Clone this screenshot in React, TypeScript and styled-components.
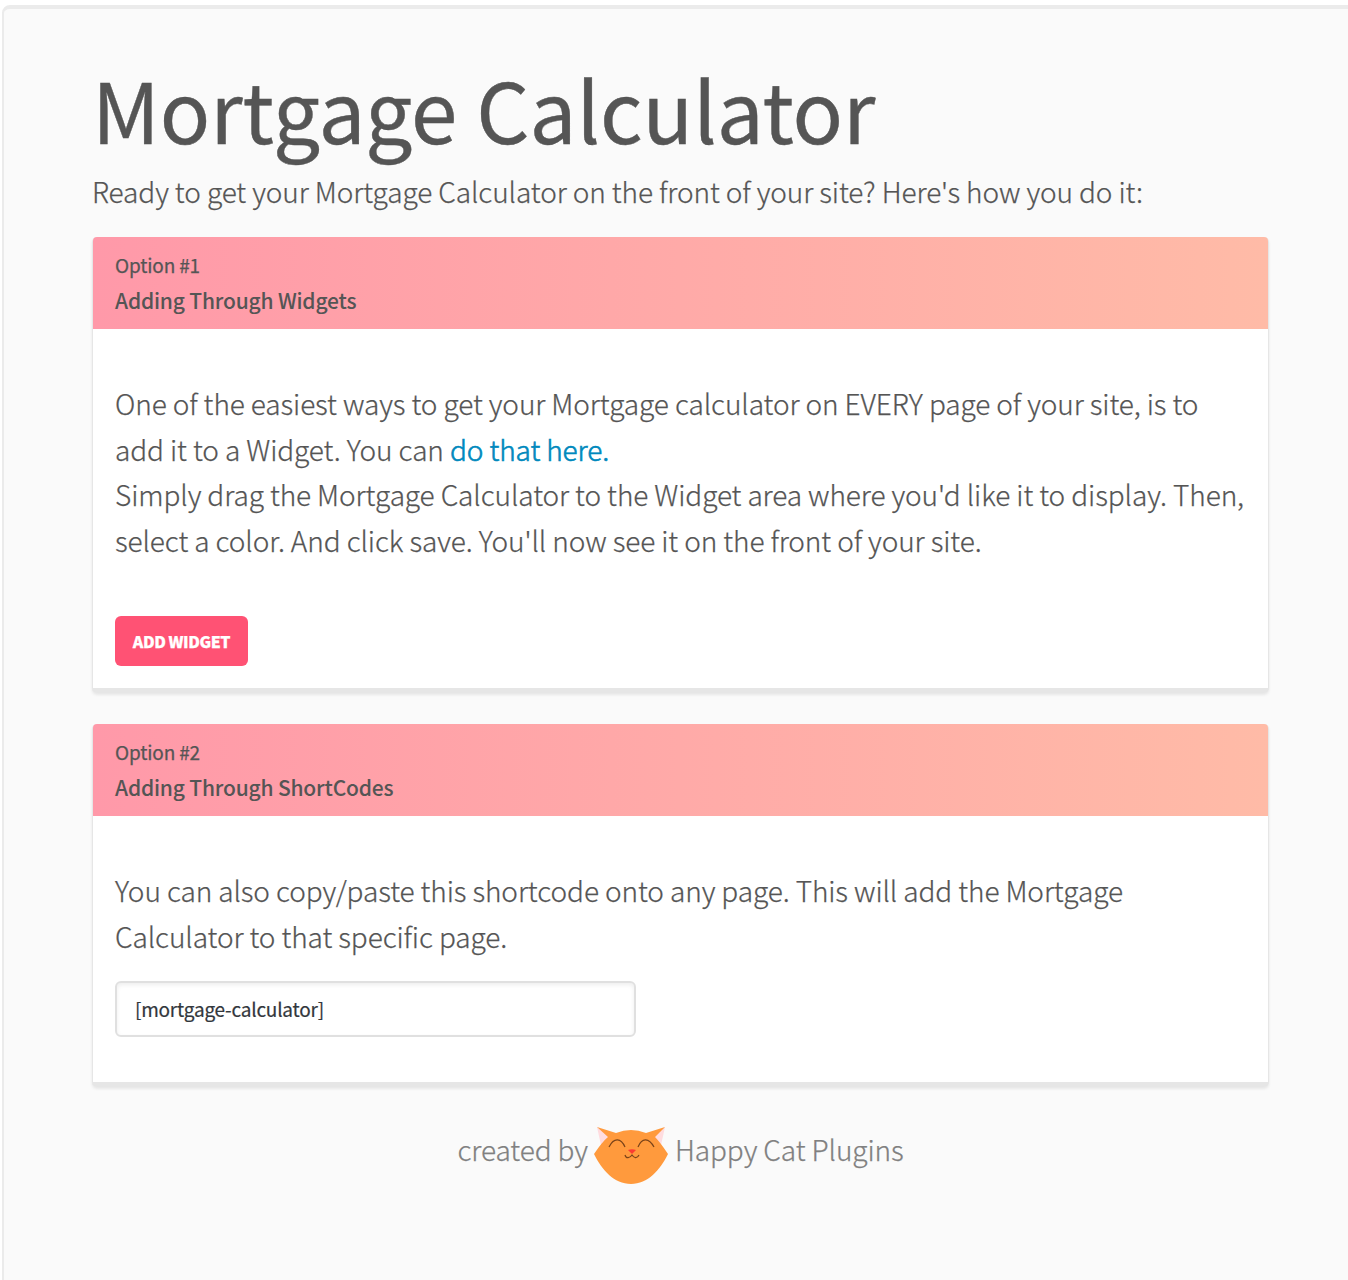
import React from "react";
import styled, { createGlobalStyle } from "styled-components";

const GlobalStyle = createGlobalStyle`
  *, *::before, *::after { box-sizing: border-box; }
  html, body { margin: 0; padding: 0; background: #fff; }
  body {
    height: 1280px;
    overflow: hidden;
    color: #555;
    font-family: "Noto Sans CJK SC", "Noto Sans", sans-serif;
    font-size: 28px;
    font-weight: 300;
    font-kerning: normal;
    letter-spacing: -0.1px;
    -webkit-text-stroke: 0.25px currentColor;
  }
`;

const Page = styled.div`
  height: 1280px;
  padding: 5px 0 0 2px;
  overflow: hidden;
`;

const Panel = styled.main`
  width: 1400px;
  height: 1400px;
  padding: 53px 132px 0 88px;
  background: #fafafa;
  border: 2px solid #ebebeb;
  border-top: 4px solid #ebebeb;
  border-radius: 8px 0 0 0;
`;

const Content = styled.div`
  display: flex;
  flex-direction: column;
  width: 1177px;
`;

const Title = styled.h1`
  margin: 0;
  font-size: 83.5px;
  font-weight: 400;
  line-height: 92px;
  letter-spacing: -0.1px;
  word-spacing: 0.5px;
  white-space: nowrap;
  -webkit-text-stroke: 0.4px currentColor;
`;

const Lead = styled.p`
  margin: 14px 0 23px;
  line-height: 46px;
  white-space: nowrap;
`;

const Card = styled.section<{ $height: number }>`
  height: ${(p) => p.$height}px;
  margin-bottom: 31px;
  background: #fff;
  border: 1px solid #e6e6e6;
  border-top: 0;
  border-bottom: 5px solid #e6e6e6;
  border-radius: 5px;
  box-shadow: 0 2px 3px rgba(0, 0, 0, 0.08);
`;

const CardHeader = styled.header`
  height: 92px;
  padding: 11px 22px 0;
  border-radius: 4px 4px 0 0;
  background: linear-gradient(90deg, #ff99a9, #ffbba7);
  font-weight: 400;
`;

const Step = styled.div`
  font-size: 19px;
  line-height: 34px;
  letter-spacing: -0.15px;
`;

const CardTitle = styled.h2`
  margin: 0;
  font-size: 21px;
  font-weight: 500;
  line-height: 36px;
  letter-spacing: -0.18px;
  -webkit-text-stroke: 0;
`;

const CardBody = styled.div`
  padding: 52px 20px 0 22px;
`;

const Copy = styled.p`
  margin: 0;
  line-height: 45.6px;
  white-space: nowrap;
`;

const Link = styled.a`
  color: #0089bd;
  text-decoration: none;
  -webkit-text-stroke: 0.6px currentColor;
`;

const Button = styled.button`
  display: block;
  width: 133px;
  height: 50px;
  margin-top: 53px;
  padding: 0;
  border: 0;
  border-radius: 6px;
  background: #ff5274;
  color: #fff;
  font: 900 16px/50px "Noto Sans CJK SC", "Noto Sans", sans-serif;
  letter-spacing: -0.45px;
  text-transform: uppercase;
`;

const CodeInput = styled.input`
  display: block;
  width: 521px;
  height: 56px;
  margin-top: 22px;
  padding: 0 18px 2px;
  border: 2px solid #e0e0e0;
  border-radius: 6px;
  background: #fff;
  box-shadow: inset 0 2px 4px rgba(0, 0, 0, 0.07);
  color: #32373c;
  font: 400 19px/28px "Noto Sans CJK SC", "Noto Sans", sans-serif;
  letter-spacing: -0.22px;
  -webkit-text-stroke: 0.2px currentColor;
`;

const Footer = styled.footer`
  display: flex;
  align-items: flex-start;
  justify-content: center;
  gap: 6px;
  height: 60px;
  margin-top: 9px;
  color: #808080;
  line-height: 44px;
  white-space: nowrap;
`;

const CatLogo = () => (
  <svg width="75" height="58" viewBox="0 0 75 58" fill="none">
    <path d="M3 0 L7 18 L18 10 Z M71 0 L67 18 L56 10 Z" fill="#ffdcdf" />
    <path
      d="M3 0 L22 6 Q37 0 52 6 L71 0 L61 10 Q66 15 74 27 C66 43 54 57 37 57 C20 57 8 43 0 27 Q8 15 14 10 Z"
      fill="#ff9a3d"
    />
    <path d="M15 20 C20 10 27 11 31 20 M44 20 C48 10 55 11 60 20" stroke="#7a4319" strokeWidth="1.2" />
    <path d="M31 28 C32 32 36 31 38 28 C40 31 43 32 45 28" stroke="#7a4319" strokeWidth="1.2" />
    <path d="M34 23 Q38 21.5 42 23 L38 27 Z" fill="#fb3c32" />
  </svg>
);

export default function App() {
  return (
    <Page>
      <GlobalStyle />
      <Panel>
        <Content>
          <Title>Mortgage Calculator</Title>
          <Lead>Ready to get your Mortgage Calculator on the front of your site? Here's how you do it:</Lead>

          <Card $height={456}>
            <CardHeader>
              <Step>Option #1</Step>
              <CardTitle>Adding Through Widgets</CardTitle>
            </CardHeader>
            <CardBody>
              <Copy>
                One of the easiest ways to get your Mortgage calculator on EVERY page of your site, is to
                <br />
                add it to a Widget. You can <Link>do that here.</Link>
                <br />
                Simply drag the Mortgage Calculator to the Widget area where you'd like it to display. Then,
                <br />
                select a color. And click save. You'll now see it on the front of your site.
              </Copy>
              <Button>Add Widget</Button>
            </CardBody>
          </Card>

          <Card $height={363}>
            <CardHeader>
              <Step>Option #2</Step>
              <CardTitle>Adding Through ShortCodes</CardTitle>
            </CardHeader>
            <CardBody>
              <Copy>
                You can also copy/paste this shortcode onto any page. This will add the Mortgage
                <br />
                Calculator to that specific page.
              </Copy>
              <CodeInput readOnly value="[mortgage-calculator]" />
            </CardBody>
          </Card>

          <Footer>
            <span>created by</span>
            <CatLogo />
            <span>Happy Cat Plugins</span>
          </Footer>
        </Content>
      </Panel>
    </Page>
  );
}
